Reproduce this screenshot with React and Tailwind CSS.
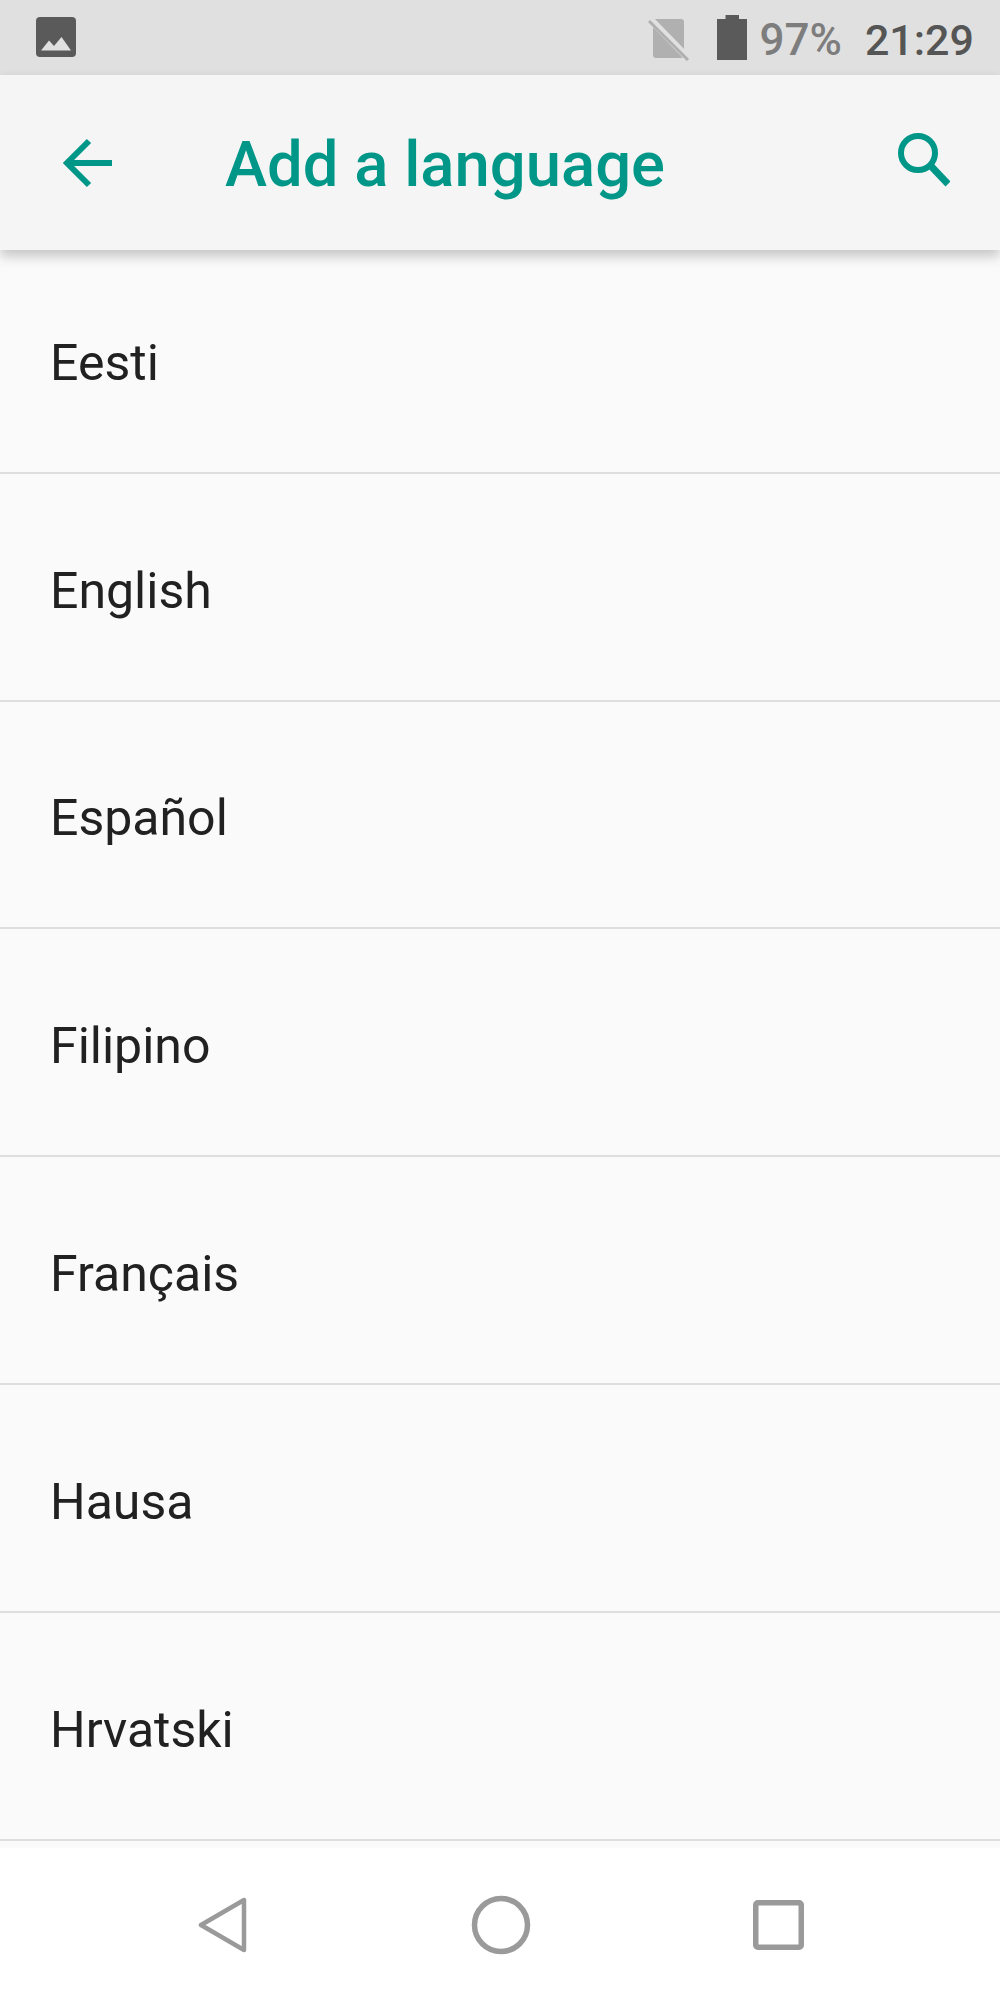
import React from "react";

const languages = ["Eesti", "English", "Español", "Filipino", "Français", "Hausa", "Hrvatski"];

function StatusBar() {
  return (
    <div className="h-[75px] bg-[#e0e0e0] flex items-center pl-[36px] pr-[26px]">
      <svg width="40" height="40" viewBox="0 0 40 40" className="mb-[1px]">
        <rect width="40" height="40" rx="4" fill="#5a5a5a" />
        <path d="M5 33.5 L13 23.5 L18 29 L25.5 20 L35 33.5 Z" fill="#e0e0e0" />
      </svg>
      <div className="ml-auto flex items-center">
        <svg width="42" height="46" viewBox="0 0 42 46">
          <path d="M5 7 a3 3 0 0 1 3-3 H33 a3 3 0 0 1 3 3 V40 a3 3 0 0 1-3 3 H8 a3 3 0 0 1-3-3 Z" fill="#b0b0b0" />
          <path d="M3 5 L39 42" stroke="#e0e0e0" strokeWidth="7" />
          <path d="M1 6 L40 45" stroke="#b0b0b0" strokeWidth="3" />
        </svg>
        <svg width="30" height="46" viewBox="0 0 30 46" className="ml-[27px]">
          <path d="M8.500 0 H22 V4 H30 V45 H0 V4 H8.500 Z" fill="#5a5a5a" />
        </svg>
        <span className="ml-[12px] pt-[5px] font-['Roboto',sans-serif] font-medium text-[44px] leading-none text-[#7d7d7d]">97%</span>
        <span className="ml-[23px] pt-[5px] font-['Roboto',sans-serif] font-medium text-[43px] leading-none text-[#555555]">21:29</span>
      </div>
    </div>
  );
}

function Toolbar() {
  return (
    <div className="relative z-10 h-[175px] bg-[#f5f5f5] flex items-center shadow-[0_6px_12px_rgba(0,0,0,0.22)]">
      <svg width="52" height="50" viewBox="0 0 52 50" className="ml-[62px]">
        <path d="M50 25 H5 M27 3 L5 25 L27 47" fill="none" stroke="#009688" strokeWidth="6" />
      </svg>
      <span className="ml-[111px] pt-[5px] font-['Roboto',sans-serif] font-medium text-[63.4px] leading-none text-[#009688] whitespace-nowrap">
        Add a language
      </span>
      <svg width="52" height="54" viewBox="0 0 52 54" className="ml-auto mr-[50px] mb-[5px]">
        <circle cx="20" cy="20" r="17" fill="none" stroke="#009688" strokeWidth="6" />
        <path d="M31 31 L50 51" fill="none" stroke="#009688" strokeWidth="7" />
      </svg>
    </div>
  );
}

function LanguageRow({ name }) {
  return (
    <div className="h-[227.8px] bg-[#fafafa] border-b-[2px] border-[#dedede] flex items-center pl-[50px]">
      <span className="pt-[8px] font-['Roboto',sans-serif] text-[50px] leading-none text-[#212121]">{name}</span>
    </div>
  );
}

function NavBar() {
  return (
    <div className="h-[152px] pt-[2px] bg-white flex items-center justify-between pl-[198px] pr-[196px]">
      <svg width="50" height="60" viewBox="0 0 50 60">
        <path d="M46 5 V55 L3 30 Z" fill="none" stroke="#9a9a9a" strokeWidth="4.500" strokeLinejoin="round" />
      </svg>
      <svg width="60" height="60" viewBox="0 0 60 60">
        <circle cx="30" cy="30" r="26.500" fill="none" stroke="#9a9a9a" strokeWidth="5.500" />
      </svg>
      <svg width="51" height="50" viewBox="0 0 51 50">
        <rect x="2.750" y="2.750" width="45.500" height="44.500" rx="2" fill="none" stroke="#9a9a9a" strokeWidth="5.500" />
      </svg>
    </div>
  );
}

export default function App() {
  return (
    <div className="w-[1000px] h-[2000px] overflow-hidden bg-[#fafafa] flex flex-col">
      <StatusBar />
      <Toolbar />
      <div className="flex-1 -mt-[4px] flex flex-col">
        {languages.map((name) => (
          <LanguageRow key={name} name={name} />
        ))}
      </div>
      <NavBar />
    </div>
  );
}
